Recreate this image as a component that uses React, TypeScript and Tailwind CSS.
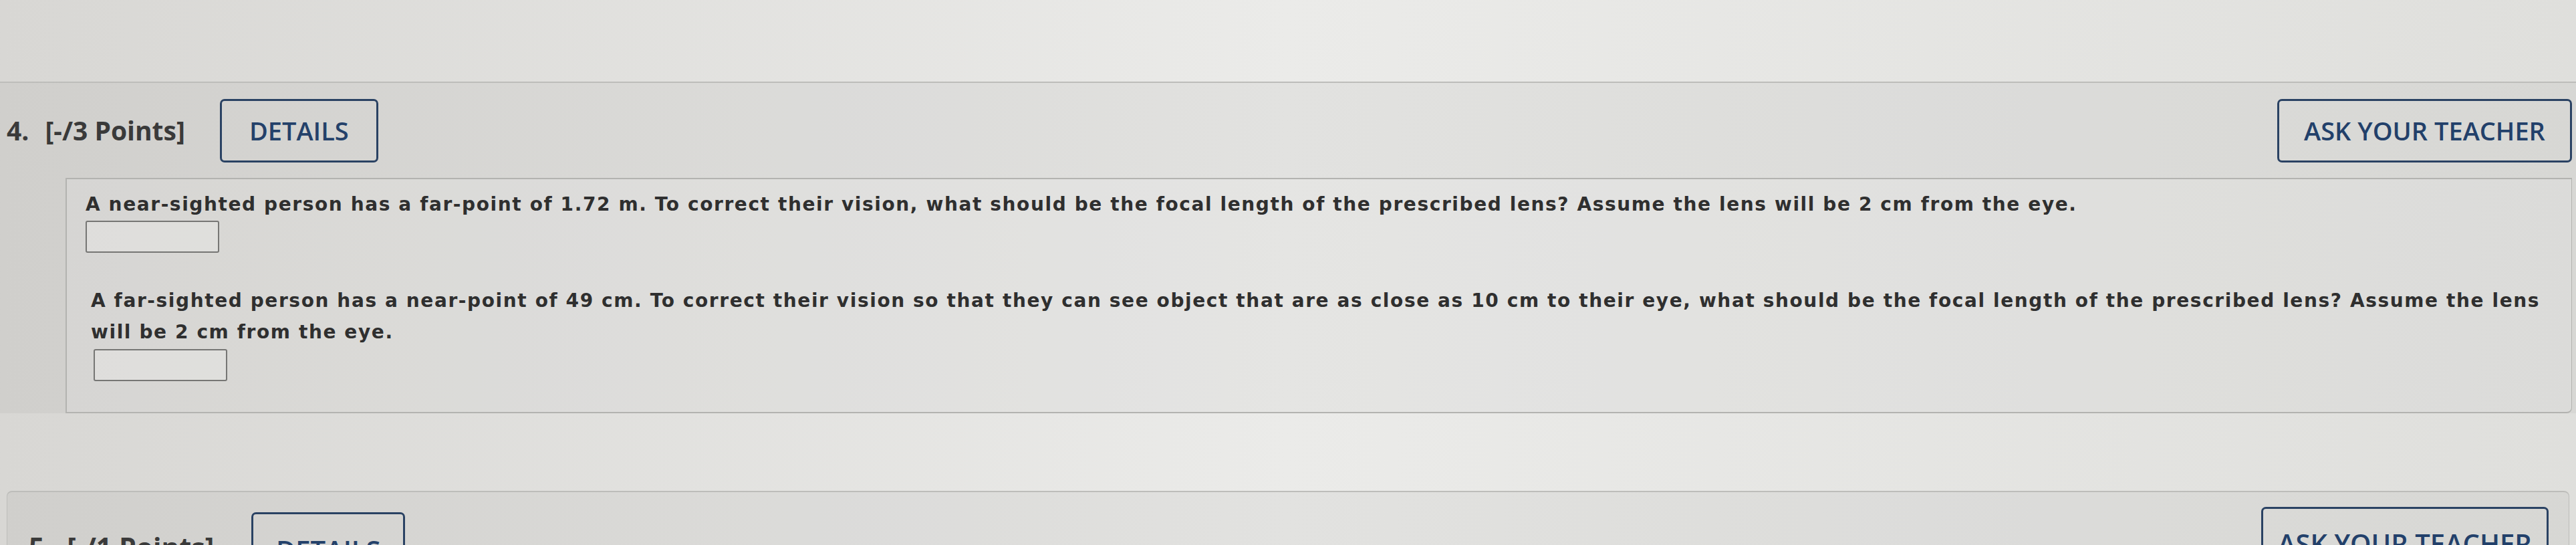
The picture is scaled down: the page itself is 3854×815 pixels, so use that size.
export default function App() {
  return (
    <main className="relative h-[815px] w-full overflow-hidden bg-linear-to-r from-[#d8d7d4] via-[#ebebe9] to-[#dfdfdc] font-['Open_Sans',sans-serif]">
      <div className="h-[122px]" />

      {/* question 4 */}
      <section className="border-t-2 border-[#bdbdba] bg-black/[0.035]">
        <div className="flex h-[142px] items-center justify-between pl-[10px] pr-[6px]">
          <div className="flex items-center">
            <span className="text-[39px] font-bold text-[#3a3a3a]">4.</span>
            <span className="ml-[24px] text-[39px] font-bold text-[#3a3a3a]">
              [-/3 Points]
            </span>
            <button
              type="button"
              className="ml-[52px] flex h-[95px] w-[237px] items-center justify-center rounded-[7px] border-[3px] border-[#2a4263] text-[38px] font-semibold text-[#24416a]"
            >
              DETAILS
            </button>
          </div>
          <button
            type="button"
            className="flex h-[95px] w-[441px] items-center justify-center rounded-[7px] border-[3px] border-[#2a4263] text-[38px] font-semibold text-[#22406a]"
          >
            ASK YOUR TEACHER
          </button>
        </div>

        <div className="ml-[98px] mr-[6px] rounded-br-[8px] border-2 border-r border-[#b3b3b0] bg-white/[0.12] pt-[14px] pr-[36px] pb-[46px] pl-[28px] font-['DejaVu_Sans',Verdana,sans-serif] text-[28px] font-bold leading-[47px] tracking-[1.6px] text-[#2f2f2f]">
          <p>
            A near-sighted person has a far-point of 1.72 m. To correct their
            vision, what should be the focal length of the prescribed lens?
            Assume the lens will be 2 cm from the eye.
          </p>
          <div className="mt-px h-[48px] w-[200px] rounded-[3px] border-2 border-[#767674] bg-white/20" />

          <p className="mt-[48px] pl-[8px]">
            A far-sighted person has a near-point of 49 cm. To correct their
            vision so that they can see object that are as close as 10 cm to
            their eye, what should be the focal length of the prescribed lens?
            Assume the lens will be 2 cm from the eye.
          </p>
          <div className="mt-[2px] ml-[12px] h-[48px] w-[200px] rounded-[3px] border-2 border-[#767674] bg-white/20" />
        </div>
      </section>

      {/* question 5, cut off at the bottom */}
      <section className="mx-[10px] mt-[116px] rounded-t-[8px] border-x border-t-2 border-[#bdbdba] bg-black/[0.035]">
        <div className="flex items-start justify-between pt-[22px] pl-[32px] pr-[30px]">
          <div className="flex items-start">
            <span className="mt-[30px] text-[41px] font-bold text-[#3a3a3a]">
              5.
            </span>
            <span className="mt-[30px] ml-[22px] text-[41px] font-bold text-[#3a3a3a]">
              [-/1 Points]
            </span>
            <button
              type="button"
              className="mt-[8px] ml-[56px] flex h-[100px] w-[230px] items-start justify-center rounded-[7px] border-[3px] border-[#2a4263] pt-[24px] text-[40px] font-semibold text-[#24416a]"
            >
              DETAILS
            </button>
          </div>
          <button
            type="button"
            className="flex h-[100px] w-[430px] items-start justify-center rounded-[7px] border-[3px] border-[#2a4263] pt-[22px] text-[40px] font-semibold text-[#22406a]"
          >
            ASK YOUR TEACHER
          </button>
        </div>
      </section>
    </main>
  );
}
